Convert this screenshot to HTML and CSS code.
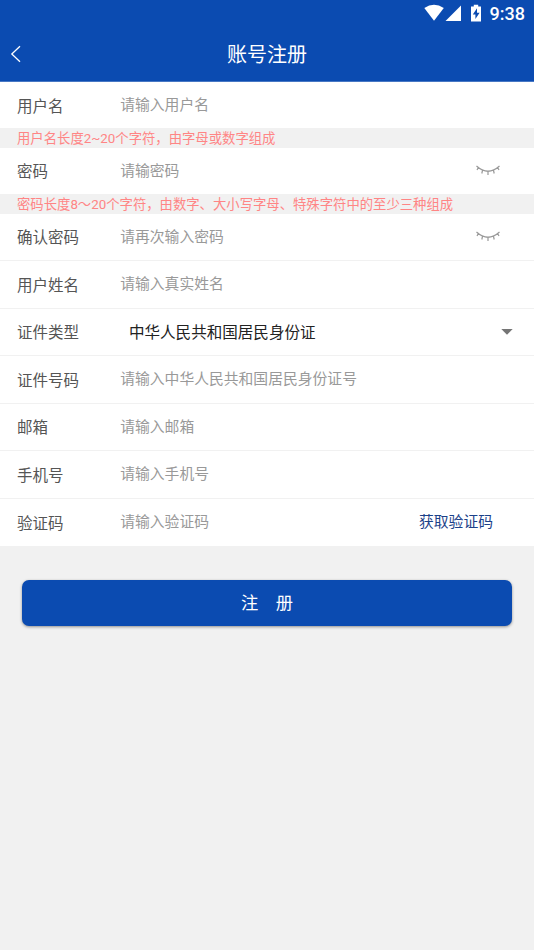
FILE: index.html
```html
<!DOCTYPE html>
<html lang="zh-CN">
<head>
<meta charset="utf-8">
<title>账号注册</title>
<link rel="stylesheet" href="styles.css">
</head>
<body>
<header class="top">
  <div class="status">
    <svg class="status-icons" width="60" height="20" viewBox="0 0 60 20" fill="#fff">
      <path d="M0.3 7.1Q10 0.2 19.8 7.1L10 19.8Z"/>
      <path d="M21.5 20L37 4.5V20Z"/>
      <path fill-rule="evenodd" d="M47 5.4h2.8V3.8h4.4v1.6H57V20.5H47ZM53 7.2l-4.2 6.3h2.6V18l4.2-6.3H53Z"/>
    </svg>
    <span class="clock">9:38</span>
  </div>
  <div class="nav">
    <svg class="back" width="12" height="18" viewBox="0 0 12 18" fill="none" stroke="#fff" stroke-width="1.3"><path d="M10 1.2L1.8 9L10 16.8"/></svg>
    <h1 class="title">账号注册</h1>
  </div>
</header>
<main>
  <div class="row"><span class="label">用户名</span><span class="field">请输入用户名</span></div>
  <p class="hint">用户名长度2~20个字符，由字母或数字组成</p>
  <div class="row"><span class="label">密码</span><span class="field">请输密码</span>
    <svg class="eye" width="24" height="11" viewBox="0 0 24 11" fill="none" stroke="#999" stroke-width="1.2"><path d="M.5 1Q12 11.5 23.5 1M2.4 2.5L1 5M6.6 5L5.8 8.5M12 6.2V10M17.4 5L18.2 8.5M21.6 2.5L23 5"/></svg>
  </div>
  <p class="hint">密码长度8～20个字符，由数字、大小写字母、特殊字符中的至少三种组成</p>
  <div class="row lined"><span class="label">确认密码</span><span class="field">请再次输入密码</span>
    <svg class="eye" width="24" height="11" viewBox="0 0 24 11" fill="none" stroke="#999" stroke-width="1.2"><path d="M.5 1Q12 11.5 23.5 1M2.4 2.5L1 5M6.6 5L5.8 8.5M12 6.2V10M17.4 5L18.2 8.5M21.6 2.5L23 5"/></svg>
  </div>
  <div class="row lined"><span class="label">用户姓名</span><span class="field">请输入真实姓名</span></div>
  <div class="row lined"><span class="label">证件类型</span><span class="choice">中华人民共和国居民身份证</span>
    <svg class="caret" width="12" height="6" viewBox="0 0 12 6" fill="#757575"><path d="M0.3 0H11.7L6 5.8Z"/></svg>
  </div>
  <div class="row lined"><span class="label">证件号码</span><span class="field">请输入中华人民共和国居民身份证号</span></div>
  <div class="row lined"><span class="label">邮箱</span><span class="field">请输入邮箱</span></div>
  <div class="row lined"><span class="label">手机号</span><span class="field">请输入手机号</span></div>
  <div class="row lined last"><span class="label">验证码</span><span class="field">请输入验证码</span><span class="code">获取验证码</span></div>
  <button class="submit"><span>注</span><span>册</span></button>
</main>
</body>
</html>
```
FILE: styles.css
```css
* { box-sizing: border-box; }
body {
  margin: 0;
  min-height: 950px;
  background: #f1f1f1;
  font-family: Roboto, "Noto Sans CJK SC", sans-serif;
}
.top { height: 82px; background: #0b4bb1; border-bottom: 1px solid #4878c4; color: #fff; }
.status {
  height: 27px;
  padding: 1px 9px 0 0;
  display: flex;
  justify-content: flex-end;
  align-items: flex-start;
}
.status-icons { margin-right: 6px; overflow: visible; }
.clock { font-size: 18px; line-height: 25px; font-weight: 500; }
.nav {
  height: 54px;
  padding: 0 10px;
  display: grid;
  grid-template-columns: 12px 1fr 12px;
  align-items: center;
}
.title { margin: 0; padding-top: 2px; text-align: center; font-size: 20px; line-height: 30px; font-weight: 400; }
.row {
  height: 46.4px;
  padding: 0 20px 0 17px;
  display: flex;
  align-items: center;
  background: #fff;
  line-height: 24px;
}
.lined { height: 47.5px; border-bottom: 1px solid #f1f1f1; }
.last { border-bottom: 0; }
.label { width: 103.2px; font-size: 15.5px; color: #555; padding-top: 3px; }
.field { flex: 1; padding-top: .3px; font-size: 14.8px; color: #999; }
.choice { flex: 1; padding: 3px 0 0 8.8px; font-size: 15.55px; color: #222; }
.eye { margin: 0 14px 0 0; }
.caret { margin-right: 1px; }
.code { margin-right: 21px; padding-top: .3px; font-size: 14.8px; color: #1b4189; }
.hint {
  height: 19.4px;
  margin: 0;
  padding: .9px 0 0 17px;
  font-size: 13.35px;
  line-height: 20px;
  color: #ff8585;
  white-space: nowrap;
}
.submit {
  display: flex;
  justify-content: center;
  align-items: center;
  gap: 17.5px;
  width: 490px;
  height: 46px;
  margin: 33.8px auto 0;
  padding: 0 0 2px;
  border: 0;
  border-radius: 7px;
  background: #0b4bb1;
  box-shadow: 0 1px 3px rgba(0, 0, 0, .4);
  color: #fff;
  font: inherit;
  font-size: 17.3px;
}
```
